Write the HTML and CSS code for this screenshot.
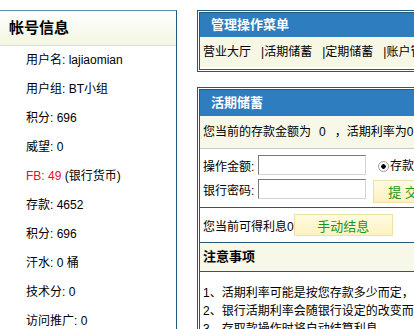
FILE: index.html
```html
<!DOCTYPE html>
<html>
<head>
    <meta charset="utf-8">
    <title>银行 - 活期储蓄</title>
    <link rel="stylesheet" href="styles.css">
</head>
<body>
    <div class="page">
        <div class="side">
            <div class="side-title">帐号信息</div>
            <div class="side-item">用户名: lajiaomian</div>
            <div class="side-item">用户组: BT小组</div>
            <div class="side-item">积分: 696</div>
            <div class="side-item">威望: 0</div>
            <div class="side-item"><span class="red">FB: 49</span> (银行货币)</div>
            <div class="side-item">存款: 4652</div>
            <div class="side-item">积分: 696</div>
            <div class="side-item">汗水: 0 桶</div>
            <div class="side-item">技术分: 0</div>
            <div class="side-item">访问推广: 0</div>
        </div>

        <div class="main">
            <div class="box">
                <div class="box-head head-short">管理操作菜单</div>
                <div class="menu">
                    <span class="menu-item">营业大厅</span>
                    <span class="menu-item">|活期储蓄</span>
                    <span class="menu-item">|定期储蓄</span>
                    <span class="menu-item">|账户管理</span>
                </div>
            </div>

            <div class="box box-gap">
                <div class="box-head">活期储蓄</div>
                <div class="info">您当前的存款金额为<span class="num">0</span>，活期利率为0.1% ，每天计息</div>
                <div class="form">
                    <div class="form-fields">
                        <div class="form-row">
                            <span class="label">操作金额:</span>
                            <input class="field" type="text">
                        </div>
                        <div class="form-row">
                            <span class="label">银行密码:</span>
                            <input class="field" type="password">
                        </div>
                    </div>
                    <div class="form-side">
                        <div class="radios">
                            <label><input class="radio" type="radio" name="op" checked>存款</label>
                            <label><input class="radio" type="radio" name="op">取款</label>
                        </div>
                        <button class="btn btn-submit">提 交</button>
                    </div>
                </div>
                <div class="interest">
                    <span>您当前可得利息0</span>
                    <button class="btn btn-wide">手动结息</button>
                </div>
                <div class="notice-head">注意事项</div>
                <div class="notice">
                    <div>1、活期利率可能是按您存款多少而定，存款越多利率越高。</div>
                    <div>2、银行活期利率会随银行设定的改变而改变。</div>
                    <div>3、存取款操作时将自动结算利息。</div>
                </div>
            </div>
        </div>
    </div>
</body>
</html>
```

FILE: styles.css
```css
body {
    margin: 0;
    background-color: #fff;
    font-family: "Liberation Sans", "Noto Sans CJK SC", sans-serif;
    font-size: 12px;
    color: #000;
    overflow: hidden;
}
.page {
    display: flex;
    align-items: flex-start;
    gap: 20px;
    padding-top: 10px;
    width: 700px;
}
.side {
    width: 176px;
    flex-shrink: 0;
    border-top: 1px solid #5b8fae;
    border-right: 1px solid #215c7e;
    height: 400px;
}
.side-title {
    height: 34px;
    line-height: 34px;
    padding-left: 9px;
    font-size: 15px;
    font-weight: bold;
    background: linear-gradient(#ffffff, #f2f6e0);
    border-bottom: 1px solid #dcdcdc;
}
.side-item {
    height: 29px;
    line-height: 29px;
    padding-left: 26px;
}
.red {
    color: #e3102d;
}
.main {
    width: 420px;
    flex-shrink: 0;
}
.box {
    border: 3px double #1f5b80;
}
.box-gap {
    margin-top: 15px;
}
.box-head {
    height: 26px;
    line-height: 26px;
    padding-left: 11px;
    background-color: #2e7dbf;
    color: #fff;
    font-size: 13px;
    font-weight: bold;
}
.head-short {
    height: 24px;
    line-height: 24px;
}
.menu {
    display: flex;
    height: 30px;
    line-height: 30px;
    padding-left: 3px;
    margin-bottom: 2px;
    background-color: #f7f7e6;
}
.menu-item {
    padding-right: 10px;
}
.info {
    height: 32px;
    line-height: 32px;
    padding-left: 3px;
    background-color: #f8f8e8;
    border-bottom: 1px solid #c9c9c9;
    white-space: nowrap;
}
.num {
    padding: 0 9px 0 8px;
}
.form {
    display: flex;
    gap: 7px;
    height: 58px;
    padding-left: 3px;
    border-bottom: 1px solid #1f5b80;
}
.form-fields {
    display: flex;
    flex-direction: column;
    gap: 4px;
    padding-top: 6px;
}
.form-row {
    display: flex;
    align-items: center;
}
.label {
    width: 55px;
}
.field {
    width: 108px;
    height: 20px;
    box-sizing: border-box;
    margin: 0;
    border: 1px solid;
    border-color: #7a7a7a #d4d4d4 #d4d4d4 #7a7a7a;
}
.form-side {
    display: flex;
    flex-direction: column;
    gap: 5px;
    padding-top: 8px;
}
.radios {
    display: flex;
    gap: 10px;
    height: 18px;
    line-height: 18px;
    padding-left: 5px;
    white-space: nowrap;
}
.radios label {
    display: flex;
    align-items: center;
    gap: 1px;
}
.radio {
    appearance: none;
    width: 11px;
    height: 11px;
    margin: 0;
    border: 1px solid #9a9a9a;
    border-radius: 50%;
    background-color: #fff;
}
.radio:checked {
    background: radial-gradient(circle, #000 2px, #fff 2.5px);
}
.btn {
    height: 23px;
    padding: 0;
    border: 1px solid #efe2a8;
    background: linear-gradient(#fffbe4, #fdf1bd);
    color: #1a961a;
    font-family: inherit;
    font-size: 13px;
}
.btn-submit {
    width: 60px;
}
.btn-wide {
    width: 99px;
    height: 22px;
}
.interest {
    display: flex;
    align-items: center;
    height: 34px;
    padding-left: 3px;
    border-bottom: 1px solid #1f5b80;
}
.notice-head {
    height: 28px;
    line-height: 28px;
    padding-left: 3px;
    font-size: 13px;
    font-weight: bold;
    background-color: #f8f8e8;
    border-bottom: 1px solid #1f5b80;
}
.notice {
    padding: 12px 0 10px 3px;
    line-height: 18px;
    white-space: nowrap;
}
```
